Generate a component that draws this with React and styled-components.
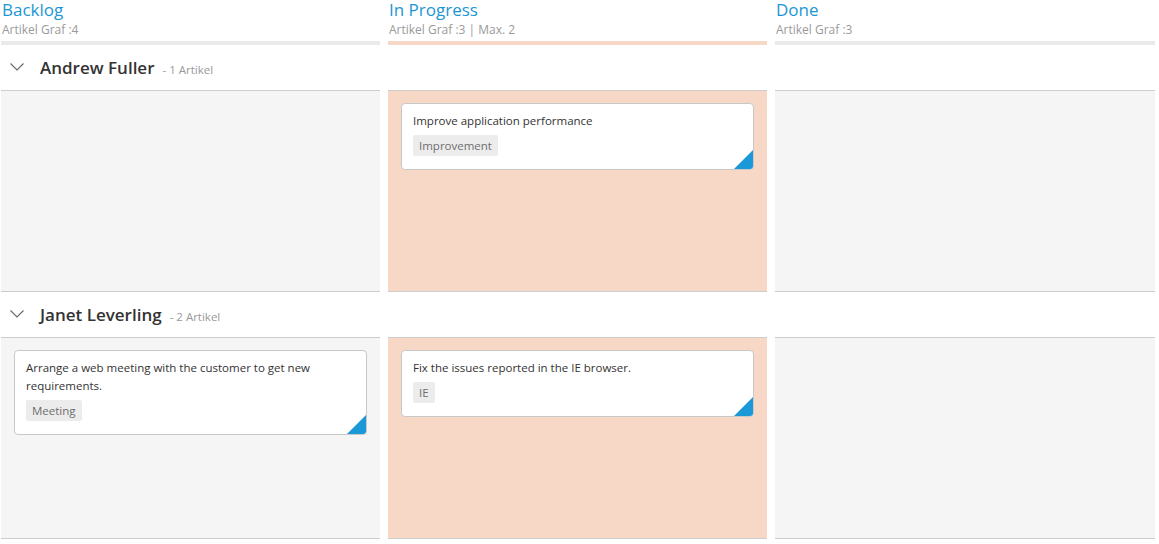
import React from 'react';
import styled, {createGlobalStyle} from 'styled-components';

const GlobalStyle = createGlobalStyle`
    body{
        margin:0;
        background:#fff;
        font-family:"Open Sans","Noto Sans",sans-serif;
    }
`;

const columns = [
    {key:'backlog', title:'Backlog', count:'Artikel Graf :4', limit:false},
    {key:'progress', title:'In Progress', count:'Artikel Graf :3 | Max. 2', limit:true},
    {key:'done', title:'Done', count:'Artikel Graf :3', limit:false},
];

const lanes = [
    {
        name:'Andrew Fuller',
        count:'- 1 Artikel',
        cards:{
            progress:[{text:'Improve application performance', tag:'Improvement'}],
        }
    },
    {
        name:'Janet Leverling',
        count:'- 2 Artikel',
        cards:{
            backlog:[{text:'Arrange a web meeting with the customer to get new requirements.', tag:'Meeting'}],
            progress:[{text:'Fix the issues reported in the IE browser.', tag:'IE'}],
        }
    },
];

const Chevron = () => (
    <svg width="14" height="8" viewBox="0 0 14 8">
        <path d="M0.5 0.5 L7 7 L13.5 0.5" fill="none" stroke="#666" strokeWidth="1.1"/>
    </svg>
);

const App = () => {
    return (
        <>
            <GlobalStyle/>
            <Board>
                {columns.map(col =>
                    <ColumnHeader key={col.key}>
                        <Title>{col.title}</Title>
                        <Count>{col.count}</Count>
                        <Bar $limit={col.limit}/>
                    </ColumnHeader>
                )}
                {lanes.map(lane =>
                    <React.Fragment key={lane.name}>
                        <LaneHeader>
                            <Toggle><Chevron/></Toggle>
                            <LaneName>{lane.name}</LaneName>
                            <LaneCount>{lane.count}</LaneCount>
                        </LaneHeader>
                        {columns.map(col =>
                            <Cell key={col.key} $limit={col.limit}>
                                {(lane.cards[col.key] || []).map(card =>
                                    <Card key={card.text}>
                                        <CardText>{card.text}</CardText>
                                        <Tag>{card.tag}</Tag>
                                        <Corner/>
                                    </Card>
                                )}
                            </Cell>
                        )}
                    </React.Fragment>
                )}
            </Board>
        </>
    )
}

const Board = styled.div`
    display:grid;
    grid-template-columns:379px 379px 380px;
    column-gap:8px;
    padding-left:1px;
    width:1154px;
`;

const ColumnHeader = styled.div`
    display:flex;
    flex-direction:column;
    height:45px;
`;

const Title = styled.div`
    font-size:17px;
    line-height:20px;
    color:#1c96d4;
    padding-left:1px;
`;

const Count = styled.div`
    font-size:12px;
    line-height:16px;
    color:#9a9a9a;
    padding-left:1px;
    margin-top:2px;
`;

const Bar = styled.div`
    margin-top:auto;
    height:4px;
    background:${props => props.$limit ? '#f7d8c7' : '#eaeaea'};
`;

const LaneHeader = styled.div`
    grid-column:1 / -1;
    display:flex;
    align-items:center;
    height:45px;
    padding-left:9px;
`;

const Toggle = styled.span`
    display:flex;
    width:30px;
    margin-top:-1px;
`;

const LaneName = styled.span`
    font-size:17px;
    font-weight:600;
    color:#333;
    margin-right:8px;
`;

const LaneCount = styled.span`
    font-size:11.5px;
    color:#999;
    margin-top:3px;
`;

const Cell = styled.div`
    box-sizing:border-box;
    height:202px;
    border-top:1px solid #cdcdcd;
    border-bottom:1px solid #cdcdcd;
    background:${props => props.$limit ? '#f7d8c7' : '#f5f5f5'};
    padding:12px 13px 0 13px;
`;

const Card = styled.div`
    position:relative;
    overflow:hidden;
    background:#fff;
    border:1px solid #c8c8c8;
    border-radius:4px;
    padding:8px 11px 13px 11px;
`;

const CardText = styled.div`
    font-size:11.5px;
    line-height:18px;
    color:#333;
`;

const Tag = styled.span`
    display:inline-block;
    margin-top:5px;
    padding:0 6px;
    height:21px;
    line-height:21px;
    background:#ececec;
    border-radius:2px;
    font-size:11.5px;
    color:#6e6e6e;
`;

const Corner = styled.div`
    position:absolute;
    right:0;
    bottom:0;
    width:0;
    height:0;
    border-style:solid;
    border-width:0 0 19px 19px;
    border-color:transparent transparent #1b98d8 transparent;
`;

export default App
